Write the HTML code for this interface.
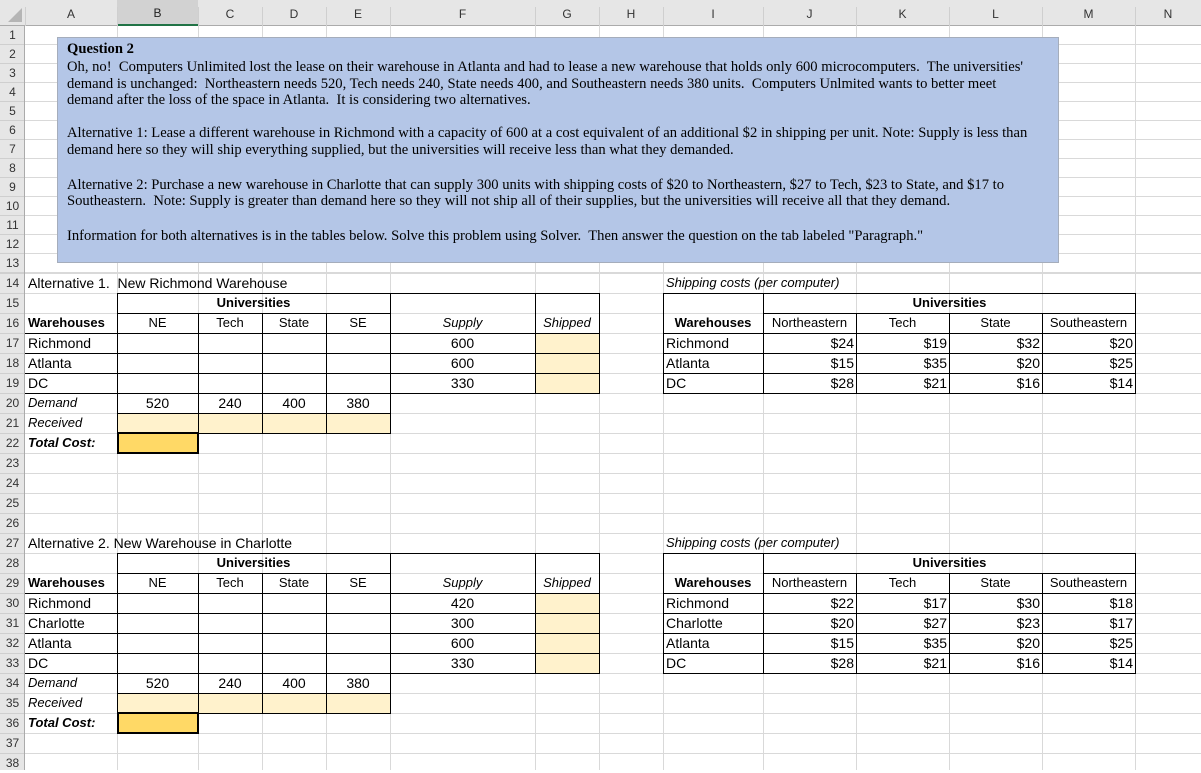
<!DOCTYPE html>
<html><head><meta charset="utf-8"><style>
*{margin:0;padding:0;box-sizing:border-box}
body{width:1201px;height:770px;overflow:hidden;background:#fff;position:relative;font-family:"Liberation Sans",Arial,sans-serif}
div{position:absolute}
.gv{width:1px;top:26px;height:744px;background:#d9d9d9}
.hd{top:0;height:26px;background:#e6e6e6;border-bottom:1px solid #ababab;font-size:12px;color:#333;text-align:center;line-height:27px}
.hs{width:1px;top:7px;height:19px;background:#cfcfcf}
.rn{left:0;width:25px;background:#e6e6e6;font-size:12px;color:#333;text-align:center}
.t{height:20px;line-height:20px;font-size:14px;white-space:pre;color:#000}
.a{font-size:13px}
.c{text-align:center}
.r{text-align:right;padding-right:2px}
.l{padding-left:3px}
.b{font-weight:bold}
.i{font-style:italic}
.h{height:1px;background:#000}
.v{width:1px;background:#000}
.y{background:#fff2cc}
.q{left:9px;font-family:"Liberation Serif","Times New Roman",serif;font-size:14.6px;white-space:pre;line-height:17px;height:17px}
</style></head><body>
<div style="left:25px;top:26px;width:1176px;height:247px;background:repeating-linear-gradient(to bottom,transparent 0,transparent 18px,#d9d9d9 18px,#d9d9d9 19px)"></div>
<div style="left:25px;top:273px;width:1176px;height:497px;background:repeating-linear-gradient(to bottom,#d9d9d9 0,#d9d9d9 1px,transparent 1px,transparent 20px)"></div>
<div class="gv" style="left:117px"></div><div class="gv" style="left:198px"></div><div class="gv" style="left:262px"></div><div class="gv" style="left:326px"></div><div class="gv" style="left:390px"></div><div class="gv" style="left:535px"></div><div class="gv" style="left:599px"></div><div class="gv" style="left:663px"></div><div class="gv" style="left:763px"></div><div class="gv" style="left:856px"></div><div class="gv" style="left:949px"></div><div class="gv" style="left:1042px"></div><div class="gv" style="left:1135px"></div>
<div class="hd" style="left:0;width:1201px"></div>
<div style="left:8px;top:8px;width:0;height:0;border-left:14px solid transparent;border-bottom:14px solid #b5b5b5"></div>
<div class="hd" style="left:117px;width:81px;background:#d2d2d2;border-bottom:2px solid #217346;color:#222">B</div>
<div class="hs" style="left:25px"></div><div class="hs" style="left:117px"></div><div class="hs" style="left:198px"></div><div class="hs" style="left:262px"></div><div class="hs" style="left:326px"></div><div class="hs" style="left:390px"></div><div class="hs" style="left:535px"></div><div class="hs" style="left:599px"></div><div class="hs" style="left:663px"></div><div class="hs" style="left:763px"></div><div class="hs" style="left:856px"></div><div class="hs" style="left:949px"></div><div class="hs" style="left:1042px"></div><div class="hs" style="left:1135px"></div>
<div class="t c" style="left:25px;top:4px;width:92px;font-size:12px;color:#333">A</div>
<div class="t c" style="left:198px;top:4px;width:64px;font-size:12px;color:#333">C</div>
<div class="t c" style="left:262px;top:4px;width:64px;font-size:12px;color:#333">D</div>
<div class="t c" style="left:326px;top:4px;width:64px;font-size:12px;color:#333">E</div>
<div class="t c" style="left:390px;top:4px;width:145px;font-size:12px;color:#333">F</div>
<div class="t c" style="left:535px;top:4px;width:64px;font-size:12px;color:#333">G</div>
<div class="t c" style="left:599px;top:4px;width:64px;font-size:12px;color:#333">H</div>
<div class="t c" style="left:663px;top:4px;width:100px;font-size:12px;color:#333">I</div>
<div class="t c" style="left:763px;top:4px;width:93px;font-size:12px;color:#333">J</div>
<div class="t c" style="left:856px;top:4px;width:93px;font-size:12px;color:#333">K</div>
<div class="t c" style="left:949px;top:4px;width:93px;font-size:12px;color:#333">L</div>
<div class="t c" style="left:1042px;top:4px;width:93px;font-size:12px;color:#333">M</div>
<div class="t c" style="left:1135px;top:4px;width:66px;font-size:12px;color:#333">N</div>
<div style="left:0;top:26px;width:25px;height:744px;background:#e6e6e6;border-right:1px solid #ababab;background-image:repeating-linear-gradient(to bottom,transparent 0,transparent 18px,#cfcfcf 18px,#cfcfcf 19px);background-size:25px 247px;background-repeat:no-repeat"></div>
<div style="left:0;top:273px;width:24px;height:497px;background:repeating-linear-gradient(to bottom,#cfcfcf 0,#cfcfcf 1px,#e6e6e6 1px,#e6e6e6 20px)"></div>
<div class="rn" style="top:26px;height:247px;background:transparent;line-height:19px">1<br>2<br>3<br>4<br>5<br>6<br>7<br>8<br>9<br>10<br>11<br>12<br>13</div>
<div class="rn" style="top:273px;height:497px;background:transparent;line-height:20px">14<br>15<br>16<br>17<br>18<br>19<br>20<br>21<br>22<br>23<br>24<br>25<br>26<br>27<br>28<br>29<br>30<br>31<br>32<br>33<br>34<br>35<br>36<br>37<br>38</div>

<div style="left:57px;top:37px;width:1002px;height:226px;background:#b4c6e7;border:1px solid #a5adbb">
<div class="q b" style="top:3px">Question 2</div>
<div class="q" style="top:21px">Oh, no!  Computers Unlimited lost the lease on their warehouse in Atlanta and had to lease a new warehouse that holds only 600 microcomputers.  The universities'</div>
<div class="q" style="top:38px">demand is unchanged:  Northeastern needs 520, Tech needs 240, State needs 400, and Southeastern needs 380 units.  Computers Unlmited wants to better meet</div>
<div class="q" style="top:54px">demand after the loss of the space in Atlanta.  It is considering two alternatives.</div>
<div class="q" style="top:87px">Alternative 1: Lease a different warehouse in Richmond with a capacity of 600 at a cost equivalent of an additional $2 in shipping per unit. Note: Supply is less than</div>
<div class="q" style="top:104px">demand here so they will ship everything supplied, but the universities will receive less than what they demanded.</div>
<div class="q" style="top:139px">Alternative 2: Purchase a new warehouse in Charlotte that can supply 300 units with shipping costs of $20 to Northeastern, $27 to Tech, $23 to State, and $17 to</div>
<div class="q" style="top:155px">Southeastern.  Note: Supply is greater than demand here so they will not ship all of their supplies, but the universities will receive all that they demand.</div>
<div class="q" style="top:190px">Information for both alternatives is in the tables below. Solve this problem using Solver.  Then answer the question on the tab labeled "Paragraph."</div>
</div>

<div class="y" style="left:535px;top:333px;width:64px;height:60px"></div>
<div class="y" style="left:117px;top:413px;width:273px;height:20px"></div>
<div style="left:117px;top:432px;width:82px;height:22px;background:#ffd966;border:2px solid #000"></div>
<div class="t l" style="left:25px;top:273px">Alternative 1.  New Richmond Warehouse</div>
<div class="t a c b" style="left:117px;top:293px;width:273px">Universities</div>
<div class="t a b l" style="left:25px;top:313px">Warehouses</div>
<div class="t a c" style="left:117px;top:313px;width:81px">NE</div>
<div class="t a c" style="left:198px;top:313px;width:64px">Tech</div>
<div class="t a c" style="left:262px;top:313px;width:64px">State</div>
<div class="t a c" style="left:326px;top:313px;width:64px">SE</div>
<div class="t a c i" style="left:390px;top:313px;width:145px">Supply</div>
<div class="t a c i" style="left:535px;top:313px;width:64px">Shipped</div>
<div class="t l" style="left:25px;top:333px">Richmond</div>
<div class="t l" style="left:25px;top:353px">Atlanta</div>
<div class="t l" style="left:25px;top:373px">DC</div>
<div class="t c" style="left:390px;top:333px;width:145px">600</div>
<div class="t c" style="left:390px;top:353px;width:145px">600</div>
<div class="t c" style="left:390px;top:373px;width:145px">330</div>
<div class="t a i l" style="left:25px;top:393px">Demand</div>
<div class="t c" style="left:117px;top:393px;width:81px">520</div>
<div class="t c" style="left:198px;top:393px;width:64px">240</div>
<div class="t c" style="left:262px;top:393px;width:64px">400</div>
<div class="t c" style="left:326px;top:393px;width:64px">380</div>
<div class="t a i l" style="left:25px;top:413px">Received</div>
<div class="t a i b l" style="left:25px;top:433px">Total Cost:</div>
<div class="h" style="left:117px;top:293px;width:483px"></div>
<div class="h" style="left:117px;top:313px;width:273px"></div>
<div class="h" style="left:25px;top:333px;width:575px"></div>
<div class="h" style="left:25px;top:353px;width:575px"></div>
<div class="h" style="left:25px;top:373px;width:575px"></div>
<div class="h" style="left:25px;top:393px;width:575px"></div>
<div class="h" style="left:117px;top:413px;width:274px"></div>
<div class="h" style="left:117px;top:433px;width:274px"></div>
<div class="v" style="left:117px;top:293px;height:140px"></div>
<div class="v" style="left:198px;top:313px;height:120px"></div>
<div class="v" style="left:262px;top:313px;height:120px"></div>
<div class="v" style="left:326px;top:313px;height:120px"></div>
<div class="v" style="left:390px;top:293px;height:141px"></div>
<div class="v" style="left:535px;top:293px;height:100px"></div>
<div class="v" style="left:599px;top:293px;height:101px"></div>
<div class="t a i" style="left:666px;top:273px">Shipping costs (per computer)</div>
<div class="t a c b" style="left:763px;top:293px;width:373px">Universities</div>
<div class="t a c b" style="left:663px;top:313px;width:100px">Warehouses</div>
<div class="t a c" style="left:763px;top:313px;width:93px">Northeastern</div>
<div class="t a c" style="left:856px;top:313px;width:93px">Tech</div>
<div class="t a c" style="left:949px;top:313px;width:93px">State</div>
<div class="t a c" style="left:1042px;top:313px;width:93px">Southeastern</div>
<div class="t l" style="left:663px;top:333px">Richmond</div>
<div class="t l" style="left:663px;top:353px">Atlanta</div>
<div class="t l" style="left:663px;top:373px">DC</div>
<div class="t r" style="left:763px;top:333px;width:93px">$24</div><div class="t r" style="left:856px;top:333px;width:93px">$19</div><div class="t r" style="left:949px;top:333px;width:93px">$32</div><div class="t r" style="left:1042px;top:333px;width:93px">$20</div>
<div class="t r" style="left:763px;top:353px;width:93px">$15</div><div class="t r" style="left:856px;top:353px;width:93px">$35</div><div class="t r" style="left:949px;top:353px;width:93px">$20</div><div class="t r" style="left:1042px;top:353px;width:93px">$25</div>
<div class="t r" style="left:763px;top:373px;width:93px">$28</div><div class="t r" style="left:856px;top:373px;width:93px">$21</div><div class="t r" style="left:949px;top:373px;width:93px">$16</div><div class="t r" style="left:1042px;top:373px;width:93px">$14</div>
<div style="left:663px;top:293px;width:473px;height:101px;border:1px solid #000"></div>
<div class="h" style="left:763px;top:313px;width:373px"></div>
<div class="h" style="left:663px;top:333px;width:473px"></div>
<div class="h" style="left:663px;top:353px;width:473px"></div>
<div class="h" style="left:663px;top:373px;width:473px"></div>
<div class="v" style="left:763px;top:293px;height:100px"></div>
<div class="v" style="left:856px;top:313px;height:80px"></div>
<div class="v" style="left:949px;top:313px;height:80px"></div>
<div class="v" style="left:1042px;top:313px;height:80px"></div>

<div class="y" style="left:535px;top:593px;width:64px;height:80px"></div>
<div class="y" style="left:117px;top:693px;width:273px;height:20px"></div>
<div style="left:117px;top:712px;width:82px;height:22px;background:#ffd966;border:2px solid #000"></div>
<div class="t l" style="left:25px;top:533px">Alternative 2. New Warehouse in Charlotte</div>
<div class="t a c b" style="left:117px;top:553px;width:273px">Universities</div>
<div class="t a b l" style="left:25px;top:573px">Warehouses</div>
<div class="t a c" style="left:117px;top:573px;width:81px">NE</div>
<div class="t a c" style="left:198px;top:573px;width:64px">Tech</div>
<div class="t a c" style="left:262px;top:573px;width:64px">State</div>
<div class="t a c" style="left:326px;top:573px;width:64px">SE</div>
<div class="t a c i" style="left:390px;top:573px;width:145px">Supply</div>
<div class="t a c i" style="left:535px;top:573px;width:64px">Shipped</div>
<div class="t l" style="left:25px;top:593px">Richmond</div>
<div class="t l" style="left:25px;top:613px">Charlotte</div>
<div class="t l" style="left:25px;top:633px">Atlanta</div>
<div class="t l" style="left:25px;top:653px">DC</div>
<div class="t c" style="left:390px;top:593px;width:145px">420</div>
<div class="t c" style="left:390px;top:613px;width:145px">300</div>
<div class="t c" style="left:390px;top:633px;width:145px">600</div>
<div class="t c" style="left:390px;top:653px;width:145px">330</div>
<div class="t a i l" style="left:25px;top:673px">Demand</div>
<div class="t c" style="left:117px;top:673px;width:81px">520</div>
<div class="t c" style="left:198px;top:673px;width:64px">240</div>
<div class="t c" style="left:262px;top:673px;width:64px">400</div>
<div class="t c" style="left:326px;top:673px;width:64px">380</div>
<div class="t a i l" style="left:25px;top:693px">Received</div>
<div class="t a i b l" style="left:25px;top:713px">Total Cost:</div>
<div class="h" style="left:117px;top:553px;width:483px"></div>
<div class="h" style="left:117px;top:573px;width:273px"></div>
<div class="h" style="left:25px;top:593px;width:575px"></div>
<div class="h" style="left:25px;top:613px;width:575px"></div>
<div class="h" style="left:25px;top:633px;width:575px"></div>
<div class="h" style="left:25px;top:653px;width:575px"></div>
<div class="h" style="left:25px;top:673px;width:575px"></div>
<div class="h" style="left:117px;top:693px;width:274px"></div>
<div class="h" style="left:117px;top:713px;width:274px"></div>
<div class="v" style="left:117px;top:553px;height:160px"></div>
<div class="v" style="left:198px;top:573px;height:140px"></div>
<div class="v" style="left:262px;top:573px;height:140px"></div>
<div class="v" style="left:326px;top:573px;height:140px"></div>
<div class="v" style="left:390px;top:553px;height:161px"></div>
<div class="v" style="left:535px;top:553px;height:120px"></div>
<div class="v" style="left:599px;top:553px;height:121px"></div>
<div class="t a i" style="left:666px;top:533px">Shipping costs (per computer)</div>
<div class="t a c b" style="left:763px;top:553px;width:373px">Universities</div>
<div class="t a c b" style="left:663px;top:573px;width:100px">Warehouses</div>
<div class="t a c" style="left:763px;top:573px;width:93px">Northeastern</div>
<div class="t a c" style="left:856px;top:573px;width:93px">Tech</div>
<div class="t a c" style="left:949px;top:573px;width:93px">State</div>
<div class="t a c" style="left:1042px;top:573px;width:93px">Southeastern</div>
<div class="t l" style="left:663px;top:593px">Richmond</div>
<div class="t l" style="left:663px;top:613px">Charlotte</div>
<div class="t l" style="left:663px;top:633px">Atlanta</div>
<div class="t l" style="left:663px;top:653px">DC</div>
<div class="t r" style="left:763px;top:593px;width:93px">$22</div><div class="t r" style="left:856px;top:593px;width:93px">$17</div><div class="t r" style="left:949px;top:593px;width:93px">$30</div><div class="t r" style="left:1042px;top:593px;width:93px">$18</div>
<div class="t r" style="left:763px;top:613px;width:93px">$20</div><div class="t r" style="left:856px;top:613px;width:93px">$27</div><div class="t r" style="left:949px;top:613px;width:93px">$23</div><div class="t r" style="left:1042px;top:613px;width:93px">$17</div>
<div class="t r" style="left:763px;top:633px;width:93px">$15</div><div class="t r" style="left:856px;top:633px;width:93px">$35</div><div class="t r" style="left:949px;top:633px;width:93px">$20</div><div class="t r" style="left:1042px;top:633px;width:93px">$25</div>
<div class="t r" style="left:763px;top:653px;width:93px">$28</div><div class="t r" style="left:856px;top:653px;width:93px">$21</div><div class="t r" style="left:949px;top:653px;width:93px">$16</div><div class="t r" style="left:1042px;top:653px;width:93px">$14</div>
<div style="left:663px;top:553px;width:473px;height:121px;border:1px solid #000"></div>
<div class="h" style="left:763px;top:573px;width:373px"></div>
<div class="h" style="left:663px;top:593px;width:473px"></div>
<div class="h" style="left:663px;top:613px;width:473px"></div>
<div class="h" style="left:663px;top:633px;width:473px"></div>
<div class="h" style="left:663px;top:653px;width:473px"></div>
<div class="v" style="left:763px;top:553px;height:120px"></div>
<div class="v" style="left:856px;top:573px;height:100px"></div>
<div class="v" style="left:949px;top:573px;height:100px"></div>
<div class="v" style="left:1042px;top:573px;height:100px"></div>
</body></html>
